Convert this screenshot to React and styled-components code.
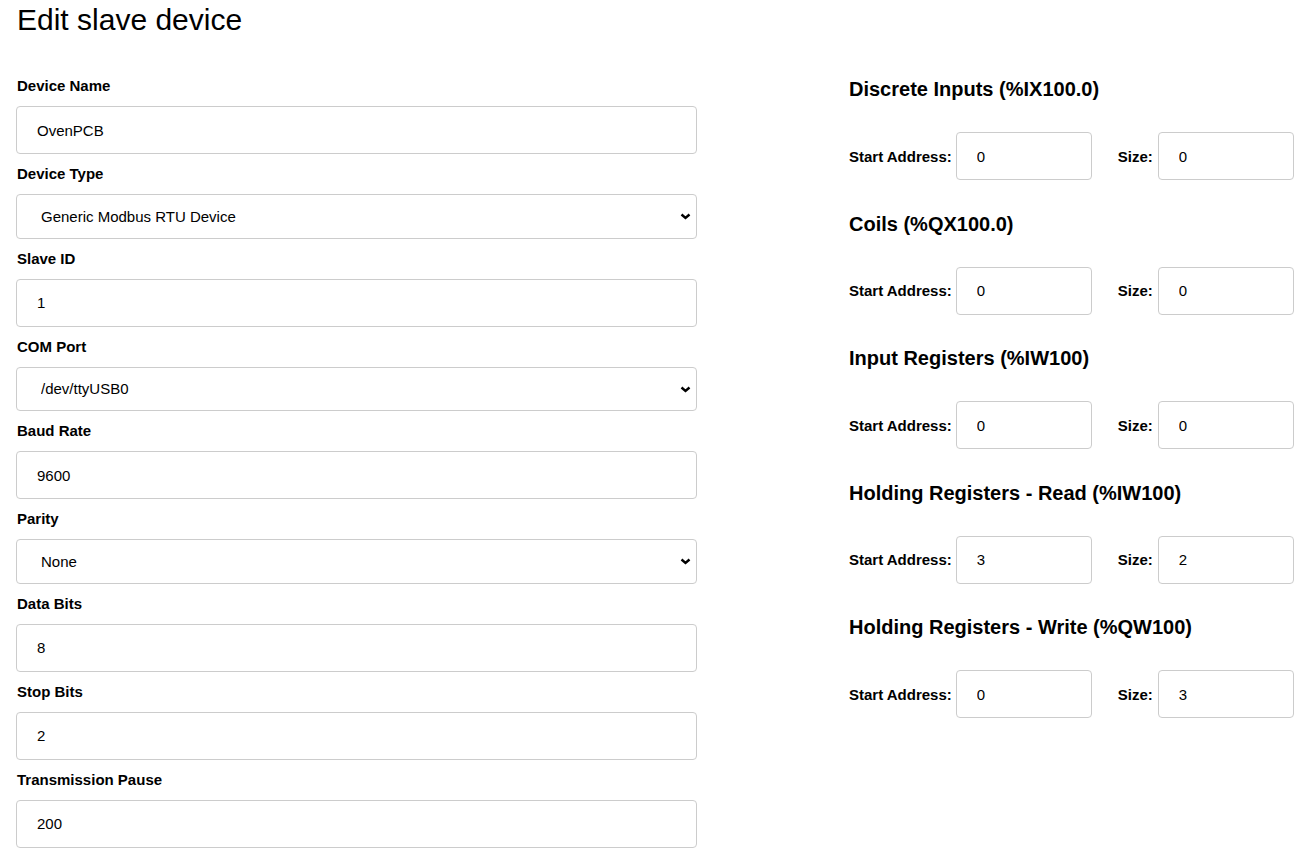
import React from "react";
import styled, { createGlobalStyle } from "styled-components";

const Global = createGlobalStyle`
  html, body { margin: 0; padding: 0; background: #fff; }
  body { font-family: "Liberation Sans", Arial, sans-serif; color: #000; }
  * { box-sizing: border-box; }
`;

const Page = styled.div`
  padding: 0 16px;
  width: 1300px;
`;

const Title = styled.h1`
  margin: 0 0 38px 1px;
  font-size: 30px;
  line-height: 40px;
  font-weight: 400;
`;

const Columns = styled.div`
  display: grid;
  grid-template-columns: 681px 445px;
  column-gap: 152px;
  align-items: start;
`;

const LeftCol = styled.div`
  display: flex;
  flex-direction: column;
`;

const Field = styled.div`
  display: flex;
  flex-direction: column;
  padding-bottom: 12px;
`;

const Label = styled.label`
  font-size: 15px;
  line-height: 16px;
  font-weight: 700;
  margin: 0 0 12px 1px;
`;

const TextInput = styled.input`
  height: 48px;
  width: 100%;
  border: 1px solid #cccccc;
  border-radius: 4px;
  padding: 0 20px;
  font-family: "Liberation Sans", Arial, sans-serif;
  font-size: 15px;
  color: #000;
  background: #fff;
  outline: none;
`;

const SelectWrap = styled.div`
  position: relative;
  width: 100%;
`;

const Select = styled.select`
  appearance: none;
  -webkit-appearance: none;
  display: block;
  height: 44.5px;
  width: 100%;
  border: 1px solid #cccccc;
  border-radius: 4px;
  padding: 0 40px 0 24px;
  font-family: "Liberation Sans", Arial, sans-serif;
  font-size: 15px;
  color: #000;
  background: #fff;
  outline: none;
`;

const Chevron = styled.svg`
  position: absolute;
  right: 6px;
  top: 50%;
  margin-top: -3px;
  pointer-events: none;
`;

const RightCol = styled.div`
  display: flex;
  flex-direction: column;
  margin-top: -1px;
`;

const Section = styled.section`
  padding-bottom: 31.5px;
`;

const Heading = styled.h2`
  margin: 0 0 31px 0;
  font-size: 20px;
  line-height: 24px;
  font-weight: 700;
`;

const Row = styled.div`
  display: flex;
  align-items: center;
  height: 48px;
`;

const RowLabel = styled.label`
  font-size: 15px;
  font-weight: 700;
  margin-right: ${(p) => p.$gap}px;
  margin-left: ${(p) => p.$lead || 0}px;
`;

const SmallInput = styled(TextInput)`
  width: 136px;
  height: 48px;
`;

const fields = [
  { label: "Device Name", value: "OvenPCB" },
  { label: "Device Type", value: "Generic Modbus RTU Device", select: true },
  { label: "Slave ID", value: "1" },
  { label: "COM Port", value: "/dev/ttyUSB0", select: true },
  { label: "Baud Rate", value: "9600" },
  { label: "Parity", value: "None", select: true },
  { label: "Data Bits", value: "8" },
  { label: "Stop Bits", value: "2" },
  { label: "Transmission Pause", value: "200" },
];

const sections = [
  { title: "Discrete Inputs (%IX100.0)", start: "0", size: "0" },
  { title: "Coils (%QX100.0)", start: "0", size: "0" },
  { title: "Input Registers (%IW100)", start: "0", size: "0" },
  { title: "Holding Registers - Read (%IW100)", start: "3", size: "2" },
  { title: "Holding Registers - Write (%QW100)", start: "0", size: "3" },
];

export default function App() {
  return (
    <Page>
      <Global />
      <Title>Edit slave device</Title>
      <Columns>
        <LeftCol>
          {fields.map((f) => (
            <Field key={f.label}>
              <Label>{f.label}</Label>
              {f.select ? (
                <SelectWrap>
                  <Select defaultValue={f.value}>
                    <option value={f.value}>{f.value}</option>
                  </Select>
                  <Chevron width="11" height="7" viewBox="0 0 11 7">
                    <polyline
                      points="1.5,1.5 5.5,5 9.5,1.5"
                      fill="none"
                      stroke="#000"
                      strokeWidth="2.4"
                    />
                  </Chevron>
                </SelectWrap>
              ) : (
                <TextInput defaultValue={f.value} />
              )}
            </Field>
          ))}
        </LeftCol>
        <RightCol>
          {sections.map((s) => (
            <Section key={s.title}>
              <Heading>{s.title}</Heading>
              <Row>
                <RowLabel $gap={4}>Start Address:</RowLabel>
                <SmallInput defaultValue={s.start} />
                <RowLabel $lead={26} $gap={5}>Size:</RowLabel>
                <SmallInput defaultValue={s.size} />
              </Row>
            </Section>
          ))}
        </RightCol>
      </Columns>
    </Page>
  );
}
